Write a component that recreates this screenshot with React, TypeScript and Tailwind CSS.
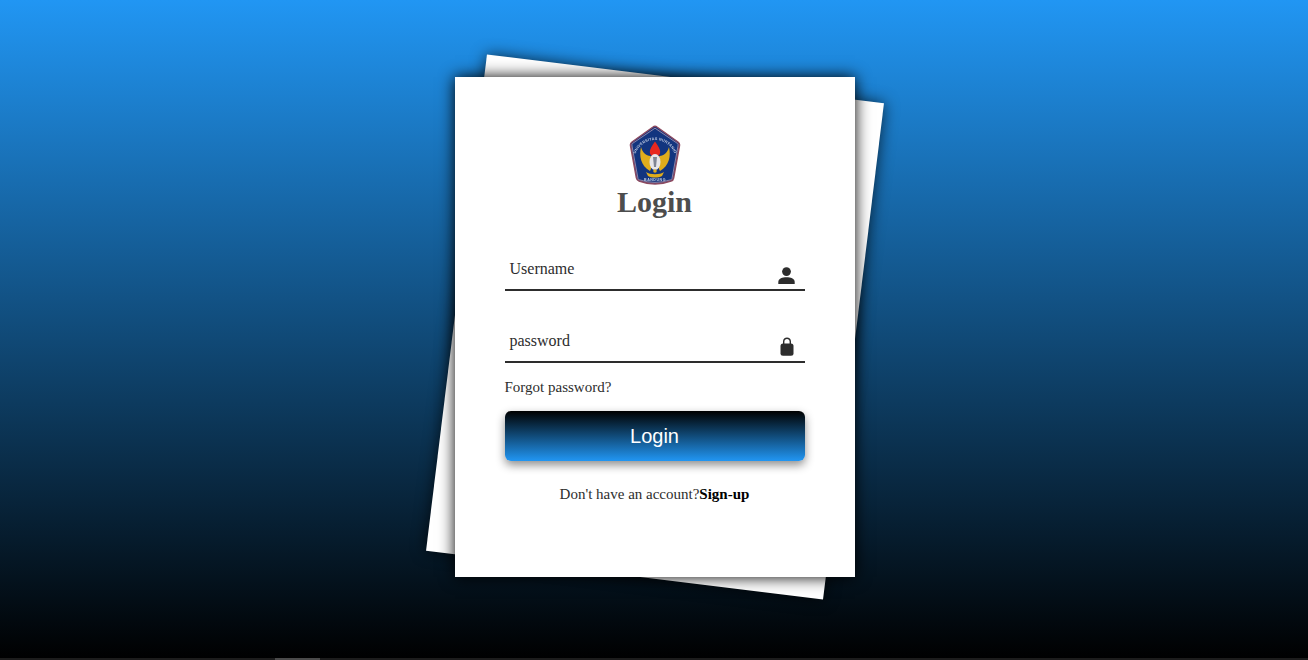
const serif = "font-['Liberation_Serif','Times_New_Roman',serif]";

const Logo = () => (
  <svg width="52" height="61" viewBox="0 0 52 61" className="block blur-[0.4px]">
    <path d="M26 1.2 Q27 1.2 28 2 L49 17 Q51 18.4 50.4 21 L44.6 53 Q44.2 55.4 42 56 Q26 62 10 56 Q7.8 55.4 7.4 53 L1.6 21 Q1 18.4 3 17 L24 2 Q25 1.2 26 1.2 Z" fill="#12357f" stroke="#8d4a60" strokeWidth="1.5" />
    <path d="M26 3.2 L48.4 18.4 Q49.4 19.2 49 21 L43 53.6 Q42.8 54.6 41.6 54.8 Q26 60 10.4 54.8 Q9.2 54.6 9 53.6 L3 21 Q2.6 19.2 3.6 18.4 Z" fill="none" stroke="#c9a6b4" strokeWidth="0.7" />
    <path d="M26 16.5 C23 21 20.8 24 20.8 27 C20.8 30 23 31.5 26 31.5 C29 31.5 31.2 30 31.2 27 C31.2 24 29 21 26 16.5 Z" fill="#e8281f" />
    <path d="M21.5 31 C17 30.5 13.5 27.5 12 22 C10 31 11.5 40.5 21 46 C23 43 23 36 21.5 31 Z" fill="#e0ad1c" />
    <path d="M30.5 31 C35 30.5 38.5 27.5 40 22 C42 31 40.5 40.5 31 46 C29 43 29 36 30.5 31 Z" fill="#e0ad1c" />
    <ellipse cx="26" cy="37" rx="5.5" ry="8" fill="#e6e6ea" />
    <path d="M24 32 L28 32 L27 42 L25 42 Z" fill="#7f8594" />
    <path d="M17 47 C21 50 31 50 35 47 L33 51 C29 53 23 53 19 51 Z" fill="#e0ad1c" />
    <circle cx="26" cy="46" r="1.8" fill="#e0ad1c" />
    <path id="logo-arc" d="M6 31 A20.5 20.5 0 0 1 46 31" fill="none" />
    <text fontSize="3.8" fontWeight="700" fill="#c3cde2" fontFamily="Liberation Sans, sans-serif" letterSpacing="0.2">
      <textPath href="#logo-arc" startOffset="50%" textAnchor="middle">UNIVERSITAS NURTANIO</textPath>
    </text>
    <text x="26" y="56" fontSize="3.6" fontWeight="700" fill="#c3cde2" textAnchor="middle" fontFamily="Liberation Sans, sans-serif" letterSpacing="0.5">BANDUNG</text>
  </svg>
);

const UserIcon = () => (
  <svg width="17" height="17" viewBox="0 0 17 17" fill="currentColor" className="block">
    <circle cx="8.5" cy="4.6" r="4.4" />
    <path d="M0.3 17 L0.3 15 C0.3 11.6 4.4 10.2 8.5 10.2 C12.6 10.2 16.7 11.6 16.7 15 L16.7 17 Z" />
  </svg>
);

const LockIcon = () => (
  <svg width="14" height="19" viewBox="0 0 14 19" fill="currentColor" className="block">
    <path d="M3 7 L3 4.5 C3 2 4.8 0.5 7 0.5 C9.2 0.5 11 2 11 4.5 L11 7 L9.6 7 L9.6 4.5 C9.6 2.9 8.5 1.9 7 1.9 C5.5 1.9 4.4 2.9 4.4 4.5 L4.4 7 Z" />
    <rect x="0.5" y="6.5" width="13" height="12.3" rx="2.5" />
  </svg>
);

const Field = ({ label, icon, iconClass }: { label: string; icon: React.ReactNode; iconClass: string }) => (
  <div className="relative h-[44px] border-b-2 border-[#2d2d2d]">
    <span className={`absolute left-[5px] top-[13px] text-base leading-[18px] text-[#2d2d2d] ${serif}`}>{label}</span>
    <span className={`absolute bottom-[5px] text-[#2d2d2d] ${iconClass}`}>{icon}</span>
  </div>
);

export default function App() {
  return (
    <div className="relative h-[660px] overflow-hidden bg-[linear-gradient(#2196f3,#000000)]">
      <div className="flex justify-center pl-[1px] pt-[77px]">
        <div className="relative h-[500px] w-[400px]">
          <div className="absolute inset-0 rotate-[7deg] bg-white shadow-[0_0_15px_rgba(0,0,0,0.7)]" />
          <div className="relative flex h-full flex-col bg-white px-[50px] pt-[48px] shadow-[0_0_15px_#000]">
            <div className="flex justify-center">
              <Logo />
            </div>
            <h1 className={`-mt-[1px] text-center text-[30px] leading-[34px] font-bold text-[#4d4d4d] ${serif}`}>Login</h1>
            <div className="mt-[28px]">
              <Field label="Username" icon={<UserIcon />} iconClass="right-[10px]" />
            </div>
            <div className="mt-[28px]">
              <Field label="password" icon={<LockIcon />} iconClass="right-[11px]" />
            </div>
            <a className={`mt-[15px] block text-[15px] leading-[18px] text-[#2d2d2d] ${serif}`}>Forgot password?</a>
            <button className="mt-[15px] h-[50px] rounded-md bg-[linear-gradient(#000000,#2196f3)] font-['Liberation_Sans',Arial,sans-serif] text-xl text-white shadow-[0_4px_10px_rgba(0,0,0,0.45)]">
              Login
            </button>
            <p className={`mt-[24px] text-center text-[15px] leading-[18px] text-[#2d2d2d] ${serif}`}>
              Don't have an account?<b className="text-black">Sign-up</b>
            </p>
          </div>
        </div>
      </div>
      <div className="absolute inset-x-0 bottom-0 h-[2px] bg-[#1c1c1c]">
        <div className="ml-[275px] h-full w-[45px] bg-[#4a4a4a]" />
      </div>
    </div>
  );
}
